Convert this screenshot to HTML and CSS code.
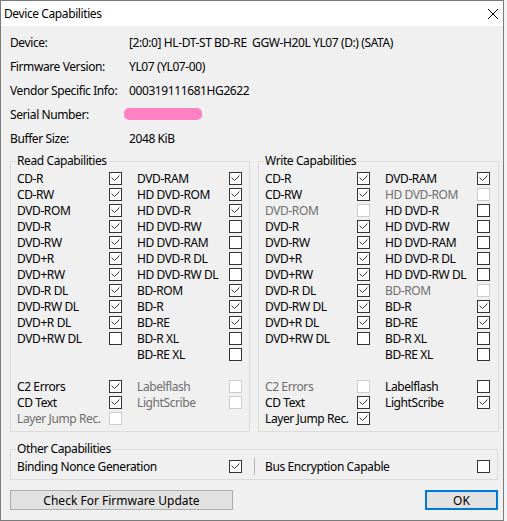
FILE: index.html
```html
<!DOCTYPE html>
<html>
<head>
<meta charset="utf-8">
<title>Device Capabilities</title>
<link rel="stylesheet" href="styles.css">
</head>
<body>
<div class="window">
  <div class="titlebar">
    <span class="title">Device Capabilities</span>
    <svg class="close" viewBox="0 0 10 10"><path d="M0 0 10 10M10 0 0 10"/></svg>
  </div>
  <div class="content">
    <div class="info">
      <span>Device:</span><span class="pre">[2:0:0] HL-DT-ST BD-RE  GGW-H20L YL07 (D:) (SATA)</span>
      <span>Firmware Version:</span><span>YL07 (YL07-00)</span>
      <span>Vendor Specific Info:</span><span>000319111681HG2622</span>
      <span>Serial Number:</span><span class="serial-mask"></span>
      <span>Buffer Size:</span><span>2048 KiB</span>
    </div>

    <div class="groups">
      <fieldset class="group read">
        <legend>Read Capabilities</legend>
        <div class="grid">
          <div class="item"><span class="lbl">CD-R</span><svg class="cb" viewBox="0 0 13 13"><rect x=".5" y=".5" width="12" height="12"/><path d="M2.5 5.5 5.5 8.5 10.5 3.5"/></svg></div>
          <div class="item"><span class="lbl">DVD-RAM</span><svg class="cb" viewBox="0 0 13 13"><rect x=".5" y=".5" width="12" height="12"/><path d="M2.5 5.5 5.5 8.5 10.5 3.5"/></svg></div>
          <div class="item"><span class="lbl">CD-RW</span><svg class="cb" viewBox="0 0 13 13"><rect x=".5" y=".5" width="12" height="12"/><path d="M2.5 5.5 5.5 8.5 10.5 3.5"/></svg></div>
          <div class="item"><span class="lbl">HD DVD-ROM</span><svg class="cb" viewBox="0 0 13 13"><rect x=".5" y=".5" width="12" height="12"/><path d="M2.5 5.5 5.5 8.5 10.5 3.5"/></svg></div>
          <div class="item"><span class="lbl">DVD-ROM</span><svg class="cb" viewBox="0 0 13 13"><rect x=".5" y=".5" width="12" height="12"/><path d="M2.5 5.5 5.5 8.5 10.5 3.5"/></svg></div>
          <div class="item"><span class="lbl">HD DVD-R</span><svg class="cb" viewBox="0 0 13 13"><rect x=".5" y=".5" width="12" height="12"/><path d="M2.5 5.5 5.5 8.5 10.5 3.5"/></svg></div>
          <div class="item"><span class="lbl">DVD-R</span><svg class="cb" viewBox="0 0 13 13"><rect x=".5" y=".5" width="12" height="12"/><path d="M2.5 5.5 5.5 8.5 10.5 3.5"/></svg></div>
          <div class="item"><span class="lbl">HD DVD-RW</span><svg class="cb" viewBox="0 0 13 13"><rect x=".5" y=".5" width="12" height="12"/></svg></div>
          <div class="item"><span class="lbl">DVD-RW</span><svg class="cb" viewBox="0 0 13 13"><rect x=".5" y=".5" width="12" height="12"/><path d="M2.5 5.5 5.5 8.5 10.5 3.5"/></svg></div>
          <div class="item"><span class="lbl">HD DVD-RAM</span><svg class="cb" viewBox="0 0 13 13"><rect x=".5" y=".5" width="12" height="12"/></svg></div>
          <div class="item"><span class="lbl">DVD+R</span><svg class="cb" viewBox="0 0 13 13"><rect x=".5" y=".5" width="12" height="12"/><path d="M2.5 5.5 5.5 8.5 10.5 3.5"/></svg></div>
          <div class="item"><span class="lbl">HD DVD-R DL</span><svg class="cb" viewBox="0 0 13 13"><rect x=".5" y=".5" width="12" height="12"/></svg></div>
          <div class="item"><span class="lbl">DVD+RW</span><svg class="cb" viewBox="0 0 13 13"><rect x=".5" y=".5" width="12" height="12"/><path d="M2.5 5.5 5.5 8.5 10.5 3.5"/></svg></div>
          <div class="item"><span class="lbl">HD DVD-RW DL</span><svg class="cb" viewBox="0 0 13 13"><rect x=".5" y=".5" width="12" height="12"/></svg></div>
          <div class="item"><span class="lbl">DVD-R DL</span><svg class="cb" viewBox="0 0 13 13"><rect x=".5" y=".5" width="12" height="12"/><path d="M2.5 5.5 5.5 8.5 10.5 3.5"/></svg></div>
          <div class="item"><span class="lbl">BD-ROM</span><svg class="cb" viewBox="0 0 13 13"><rect x=".5" y=".5" width="12" height="12"/><path d="M2.5 5.5 5.5 8.5 10.5 3.5"/></svg></div>
          <div class="item"><span class="lbl">DVD-RW DL</span><svg class="cb" viewBox="0 0 13 13"><rect x=".5" y=".5" width="12" height="12"/><path d="M2.5 5.5 5.5 8.5 10.5 3.5"/></svg></div>
          <div class="item"><span class="lbl">BD-R</span><svg class="cb" viewBox="0 0 13 13"><rect x=".5" y=".5" width="12" height="12"/><path d="M2.5 5.5 5.5 8.5 10.5 3.5"/></svg></div>
          <div class="item"><span class="lbl">DVD+R DL</span><svg class="cb" viewBox="0 0 13 13"><rect x=".5" y=".5" width="12" height="12"/><path d="M2.5 5.5 5.5 8.5 10.5 3.5"/></svg></div>
          <div class="item"><span class="lbl">BD-RE</span><svg class="cb" viewBox="0 0 13 13"><rect x=".5" y=".5" width="12" height="12"/><path d="M2.5 5.5 5.5 8.5 10.5 3.5"/></svg></div>
          <div class="item"><span class="lbl">DVD+RW DL</span><svg class="cb" viewBox="0 0 13 13"><rect x=".5" y=".5" width="12" height="12"/></svg></div>
          <div class="item"><span class="lbl">BD-R XL</span><svg class="cb" viewBox="0 0 13 13"><rect x=".5" y=".5" width="12" height="12"/></svg></div>
          <div class="item"></div>
          <div class="item"><span class="lbl">BD-RE XL</span><svg class="cb" viewBox="0 0 13 13"><rect x=".5" y=".5" width="12" height="12"/></svg></div>
          <div class="item"></div>
          <div class="item"></div>
          <div class="item"><span class="lbl">C2 Errors</span><svg class="cb" viewBox="0 0 13 13"><rect x=".5" y=".5" width="12" height="12"/><path d="M2.5 5.5 5.5 8.5 10.5 3.5"/></svg></div>
          <div class="item dis"><span class="lbl">Labelflash</span><svg class="cb" viewBox="0 0 13 13"><rect x=".5" y=".5" width="12" height="12"/></svg></div>
          <div class="item"><span class="lbl">CD Text</span><svg class="cb" viewBox="0 0 13 13"><rect x=".5" y=".5" width="12" height="12"/><path d="M2.5 5.5 5.5 8.5 10.5 3.5"/></svg></div>
          <div class="item dis"><span class="lbl">LightScribe</span><svg class="cb" viewBox="0 0 13 13"><rect x=".5" y=".5" width="12" height="12"/></svg></div>
          <div class="item dis"><span class="lbl">Layer Jump Rec.</span><svg class="cb" viewBox="0 0 13 13"><rect x=".5" y=".5" width="12" height="12"/></svg></div>
          <div class="item"></div>
        </div>
      </fieldset>

      <fieldset class="group write">
        <legend>Write Capabilities</legend>
        <div class="grid">
          <div class="item"><span class="lbl">CD-R</span><svg class="cb" viewBox="0 0 13 13"><rect x=".5" y=".5" width="12" height="12"/><path d="M2.5 5.5 5.5 8.5 10.5 3.5"/></svg></div>
          <div class="item"><span class="lbl">DVD-RAM</span><svg class="cb" viewBox="0 0 13 13"><rect x=".5" y=".5" width="12" height="12"/><path d="M2.5 5.5 5.5 8.5 10.5 3.5"/></svg></div>
          <div class="item"><span class="lbl">CD-RW</span><svg class="cb" viewBox="0 0 13 13"><rect x=".5" y=".5" width="12" height="12"/><path d="M2.5 5.5 5.5 8.5 10.5 3.5"/></svg></div>
          <div class="item dis"><span class="lbl">HD DVD-ROM</span><svg class="cb" viewBox="0 0 13 13"><rect x=".5" y=".5" width="12" height="12"/></svg></div>
          <div class="item dis"><span class="lbl">DVD-ROM</span><svg class="cb" viewBox="0 0 13 13"><rect x=".5" y=".5" width="12" height="12"/></svg></div>
          <div class="item"><span class="lbl">HD DVD-R</span><svg class="cb" viewBox="0 0 13 13"><rect x=".5" y=".5" width="12" height="12"/></svg></div>
          <div class="item"><span class="lbl">DVD-R</span><svg class="cb" viewBox="0 0 13 13"><rect x=".5" y=".5" width="12" height="12"/><path d="M2.5 5.5 5.5 8.5 10.5 3.5"/></svg></div>
          <div class="item"><span class="lbl">HD DVD-RW</span><svg class="cb" viewBox="0 0 13 13"><rect x=".5" y=".5" width="12" height="12"/></svg></div>
          <div class="item"><span class="lbl">DVD-RW</span><svg class="cb" viewBox="0 0 13 13"><rect x=".5" y=".5" width="12" height="12"/><path d="M2.5 5.5 5.5 8.5 10.5 3.5"/></svg></div>
          <div class="item"><span class="lbl">HD DVD-RAM</span><svg class="cb" viewBox="0 0 13 13"><rect x=".5" y=".5" width="12" height="12"/></svg></div>
          <div class="item"><span class="lbl">DVD+R</span><svg class="cb" viewBox="0 0 13 13"><rect x=".5" y=".5" width="12" height="12"/><path d="M2.5 5.5 5.5 8.5 10.5 3.5"/></svg></div>
          <div class="item"><span class="lbl">HD DVD-R DL</span><svg class="cb" viewBox="0 0 13 13"><rect x=".5" y=".5" width="12" height="12"/></svg></div>
          <div class="item"><span class="lbl">DVD+RW</span><svg class="cb" viewBox="0 0 13 13"><rect x=".5" y=".5" width="12" height="12"/><path d="M2.5 5.5 5.5 8.5 10.5 3.5"/></svg></div>
          <div class="item"><span class="lbl">HD DVD-RW DL</span><svg class="cb" viewBox="0 0 13 13"><rect x=".5" y=".5" width="12" height="12"/></svg></div>
          <div class="item"><span class="lbl">DVD-R DL</span><svg class="cb" viewBox="0 0 13 13"><rect x=".5" y=".5" width="12" height="12"/><path d="M2.5 5.5 5.5 8.5 10.5 3.5"/></svg></div>
          <div class="item dis"><span class="lbl">BD-ROM</span><svg class="cb" viewBox="0 0 13 13"><rect x=".5" y=".5" width="12" height="12"/></svg></div>
          <div class="item"><span class="lbl">DVD-RW DL</span><svg class="cb" viewBox="0 0 13 13"><rect x=".5" y=".5" width="12" height="12"/><path d="M2.5 5.5 5.5 8.5 10.5 3.5"/></svg></div>
          <div class="item"><span class="lbl">BD-R</span><svg class="cb" viewBox="0 0 13 13"><rect x=".5" y=".5" width="12" height="12"/><path d="M2.5 5.5 5.5 8.5 10.5 3.5"/></svg></div>
          <div class="item"><span class="lbl">DVD+R DL</span><svg class="cb" viewBox="0 0 13 13"><rect x=".5" y=".5" width="12" height="12"/><path d="M2.5 5.5 5.5 8.5 10.5 3.5"/></svg></div>
          <div class="item"><span class="lbl">BD-RE</span><svg class="cb" viewBox="0 0 13 13"><rect x=".5" y=".5" width="12" height="12"/><path d="M2.5 5.5 5.5 8.5 10.5 3.5"/></svg></div>
          <div class="item"><span class="lbl">DVD+RW DL</span><svg class="cb" viewBox="0 0 13 13"><rect x=".5" y=".5" width="12" height="12"/></svg></div>
          <div class="item"><span class="lbl">BD-R XL</span><svg class="cb" viewBox="0 0 13 13"><rect x=".5" y=".5" width="12" height="12"/></svg></div>
          <div class="item"></div>
          <div class="item"><span class="lbl">BD-RE XL</span><svg class="cb" viewBox="0 0 13 13"><rect x=".5" y=".5" width="12" height="12"/></svg></div>
          <div class="item"></div>
          <div class="item"></div>
          <div class="item dis"><span class="lbl">C2 Errors</span><svg class="cb" viewBox="0 0 13 13"><rect x=".5" y=".5" width="12" height="12"/></svg></div>
          <div class="item"><span class="lbl">Labelflash</span><svg class="cb" viewBox="0 0 13 13"><rect x=".5" y=".5" width="12" height="12"/></svg></div>
          <div class="item"><span class="lbl">CD Text</span><svg class="cb" viewBox="0 0 13 13"><rect x=".5" y=".5" width="12" height="12"/><path d="M2.5 5.5 5.5 8.5 10.5 3.5"/></svg></div>
          <div class="item"><span class="lbl">LightScribe</span><svg class="cb" viewBox="0 0 13 13"><rect x=".5" y=".5" width="12" height="12"/><path d="M2.5 5.5 5.5 8.5 10.5 3.5"/></svg></div>
          <div class="item"><span class="lbl">Layer Jump Rec.</span><svg class="cb" viewBox="0 0 13 13"><rect x=".5" y=".5" width="12" height="12"/><path d="M2.5 5.5 5.5 8.5 10.5 3.5"/></svg></div>
          <div class="item"></div>
        </div>
      </fieldset>
    </div>

    <fieldset class="group other">
      <legend>Other Capabilities</legend>
      <div class="other-row">
        <div class="item wide"><span class="lbl">Binding Nonce Generation</span><svg class="cb" viewBox="0 0 13 13"><rect x=".5" y=".5" width="12" height="12"/><path d="M2.5 5.5 5.5 8.5 10.5 3.5"/></svg></div>
        <span class="sep"></span>
        <div class="item wide"><span class="lbl">Bus Encryption Capable</span><svg class="cb" viewBox="0 0 13 13"><rect x=".5" y=".5" width="12" height="12"/></svg></div>
      </div>
    </fieldset>

    <div class="buttons">
      <button class="btn btn-check">Check For Firmware Update</button>
      <button class="btn btn-ok">OK</button>
    </div>
  </div>
</div>
</body>
</html>
```

FILE: styles.css
```css
html {
  background: #f4f4f4;
}

body {
  margin: 0;
  font-family: "Noto Sans", "Open Sans", sans-serif;
  font-size: 12px;
  letter-spacing: -0.4px;
  color: #000;
}

.window {
  width: 504px;
  height: 521px;
  box-sizing: border-box;
  border: 1px solid #7a7a7a;
  background: #f0f0f0;
  display: flex;
  flex-direction: column;
}

.titlebar {
  flex: none;
  height: 25px;
  background: #fff;
  display: flex;
  align-items: center;
  justify-content: space-between;
  padding: 0 5px 0 3px;
}

.title {
  line-height: 25px;
}

.close {
  width: 10px;
  height: 10px;
  display: block;
}

.close path {
  stroke: #000;
  stroke-width: 1;
  fill: none;
}

.content {
  padding: 4px 0 0 9px;
}

.info {
  display: grid;
  grid-template-columns: 119px auto;
  grid-auto-rows: 24px;
  align-items: center;
}

.pre {
  white-space: pre;
}

.serial-mask {
  width: 78px;
  height: 12px;
  margin-left: -5px;
  background: #ff82c4;
  border-radius: 5px;
}

.groups {
  display: flex;
  gap: 8px;
  margin-top: 3px;
}

fieldset.group {
  margin: 0;
  padding: 1px 0 5px 6px;
  border: 1px solid #dcdcdc;
  box-sizing: border-box;
  min-width: 0;
}

.group legend {
  padding: 0 1px;
  margin-left: -1px;
  line-height: 16px;
}

.read {
  width: 240px;
}

.write {
  width: 241px;
}

.grid {
  display: grid;
  grid-template-columns: 105px 105px;
  column-gap: 15px;
  grid-auto-rows: 16px;
}

.item {
  display: flex;
  align-items: center;
}

.lbl {
  width: 92px;
  flex: none;
  white-space: nowrap;
}

.cb {
  width: 13px;
  height: 13px;
  display: block;
  flex: none;
}

.cb rect {
  fill: #fff;
  stroke: #333;
  stroke-width: 1;
}

.cb path {
  fill: none;
  stroke: #333;
  stroke-width: 1;
}

.dis .lbl {
  color: #6d6d6d;
}

.dis .cb rect {
  stroke: #cccccc;
}

fieldset.other {
  width: 488px;
  margin-top: 9px;
}

.other-row {
  display: flex;
  align-items: center;
  height: 16px;
}

.wide .lbl {
  width: 212px;
}

.sep {
  width: 1px;
  height: 17px;
  background: #b4b4b4;
  margin: 0 10px 0 12px;
}

.buttons {
  width: 488px;
  display: flex;
  justify-content: space-between;
  margin-top: 10px;
}

.btn {
  height: 20px;
  padding: 0;
  margin: 0;
  font: inherit;
  color: #000;
  background: #e1e1e1;
  border: 1px solid #adadad;
  box-sizing: border-box;
}

.btn-check {
  width: 223px;
}

.btn-ok {
  width: 73px;
  border: 2px solid #0078d7;
}
```
